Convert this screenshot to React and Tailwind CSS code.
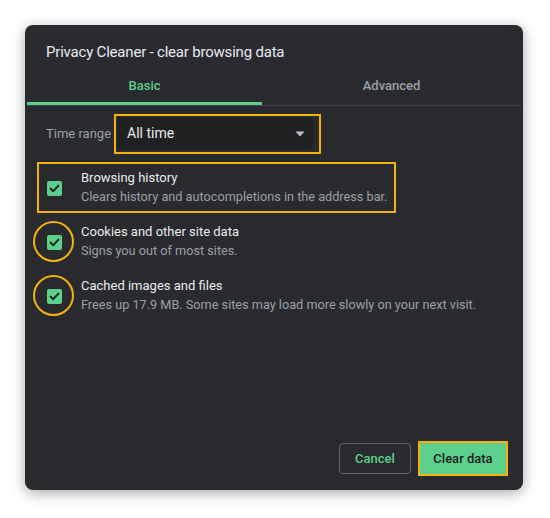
import React from "react";

function Check() {
  return (
    <div className="w-[15px] h-[15px] rounded-[2px] bg-[#5ccf8c] flex items-center justify-center shrink-0">
      <svg width="15" height="15" viewBox="0 0 15 15">
        <polyline points="3.6,7.6 6.3,10.2 11.4,4.6" fill="none" stroke="#1b1d1f" strokeWidth="1.9" strokeLinecap="round" strokeLinejoin="round" />
      </svg>
    </div>
  );
}

function Row({ title, desc, mark }) {
  return (
    <div className="relative h-[54px] flex items-center pl-[22px]">
      {mark === "box" && (
        <span className="absolute left-[12px] top-[2px] w-[359px] h-[51px] border-[2.5px] border-[#f4b30c] pointer-events-none" />
      )}
      {mark === "circle" && (
        <span className="absolute left-[8px] top-[7px] w-[41px] h-[41px] rounded-full border-[2.5px] border-[#f4b30c] pointer-events-none" />
      )}
      <div className="mt-[3px]">
        <Check />
      </div>
      <div className="ml-[19px] flex flex-col leading-[19px]">
        <span className="text-[13px] text-[#e8eaed]">{title}</span>
        <span className="text-[12.7px] text-[#9aa0a6]">{desc}</span>
      </div>
    </div>
  );
}

export default function App() {
  return (
    <div
      className="w-[550px] h-[518px] bg-white pt-[25px] pl-[25px]"
      style={{ fontFamily: "Roboto, 'Noto Sans', Arial, sans-serif" }}
    >
      <div className="w-[498px] h-[465px] rounded-[8px] bg-[#292a2d] shadow-[0_3px_14px_rgba(0,0,0,0.35)] flex flex-col">
        <div className="pt-[17px] pb-[8px] px-[21px] text-[15px] tracking-[-0.2px] leading-[20px] text-[#e8eaed]">
          Privacy Cleaner - clear browsing data
        </div>
        <div className="mx-[2px] flex border-b border-[#3c4043]">
          <div className="w-[235px] h-[35px] flex items-start justify-center pt-[6px] border-b-[3px] border-[#5ccf8c] -mb-px text-[13px] leading-[20px] font-medium text-[#5ccf8c]">
            Basic
          </div>
          <div className="flex-1 h-[35px] flex items-start justify-center pt-[6px] text-[13px] leading-[20px] font-medium text-[#9aa0a6]">
            Advanced
          </div>
        </div>
        <div className="mt-[8px] pl-[21px] flex items-center">
          <span className="text-[13px] text-[#9aa0a6] w-[68px]">Time range</span>
          <div className="w-[207px] h-[40px] border-[2.5px] border-[#f4b30c] pl-[1px] pt-[1px] pr-[6px] pb-[2px]">
            <div className="h-full rounded-[4px] bg-[#1f2022] flex items-center justify-between pl-[10px] pr-[8px]">
              <span className="text-[14px] text-[#e8eaed]">All time</span>
              <svg width="10" height="6" viewBox="0 0 10 6">
                <path d="M0.5 0.5 L9.5 0.5 L5 5.5 Z" fill="#bdc1c6" />
              </svg>
            </div>
          </div>
        </div>
        <div className="mt-[6px] flex flex-col">
          <Row mark="box" title="Browsing history" desc="Clears history and autocompletions in the address bar." />
          <Row mark="circle" title="Cookies and other site data" desc="Signs you out of most sites." />
          <Row mark="circle" title="Cached images and files" desc="Frees up 17.9 MB. Some sites may load more slowly on your next visit." />
        </div>
        <div className="flex-1" />
        <div className="flex justify-end items-center gap-[9px] pr-[17px] pb-[16px]">
          <button className="w-[72px] h-[31px] rounded-[4px] border border-[#5f6368] text-[13px] font-medium text-[#5ccf8c]">
            Cancel
          </button>
          <button className="w-[86px] h-[31px] bg-[#5ccf8c] ring-2 ring-[#f4b30c] text-[13px] font-medium text-[#1b1d1f]">
            Clear data
          </button>
        </div>
      </div>
    </div>
  );
}
